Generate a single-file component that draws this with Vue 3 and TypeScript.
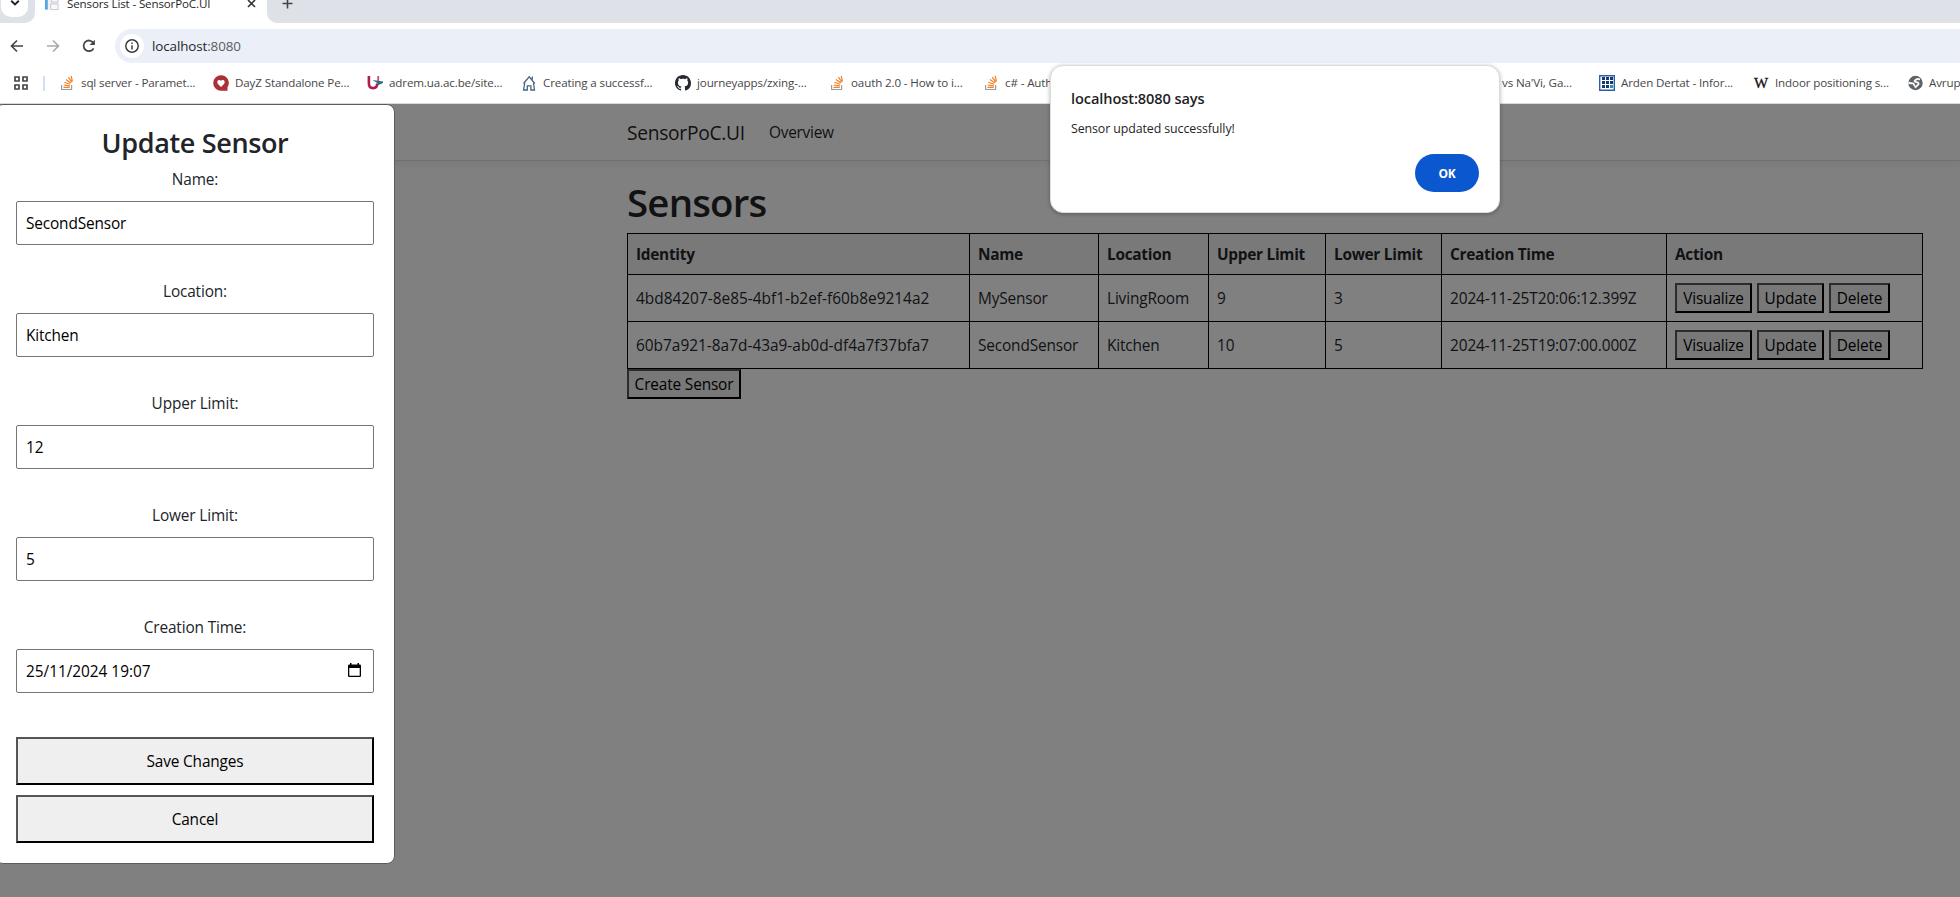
<script setup lang="ts">
import { ref } from 'vue'

interface Bookmark {
  label: string
  icon: string
  left: number
  width: number
}

interface Sensor {
  id: string
  name: string
  location: string
  upper: number
  lower: number
  created: string
}

// left = start of the icon slot, width = room taken up to the next entry
const bookmarks: Bookmark[] = [
  { label: 'sql server - Paramet...', icon: 'stack', left: 59, width: 154 },
  { label: 'DayZ Standalone Pe...', icon: 'heart', left: 213, width: 154 },
  { label: 'adrem.ua.ac.be/site...', icon: 'ua', left: 367, width: 154 },
  { label: 'Creating a successf...', icon: 'house', left: 521, width: 154 },
  { label: 'journeyapps/zxing-...', icon: 'github', left: 675, width: 154 },
  { label: 'oauth 2.0 - How to i...', icon: 'stack', left: 829, width: 154 },
  { label: 'c# - Auth', icon: 'stack', left: 983, width: 154 },
  { label: '', icon: 'none', left: 1137, width: 343 },
  { label: "vs Na'Vi, Ga...", icon: 'none', left: 1480, width: 119 },
  { label: 'Arden Dertat - Infor...', icon: 'grid', left: 1599, width: 154 },
  { label: 'Indoor positioning s...', icon: 'wiki', left: 1753, width: 154 },
  { label: 'Avrup', icon: 'globe', left: 1907, width: 154 },
]

const columns = ['Identity', 'Name', 'Location', 'Upper Limit', 'Lower Limit', 'Creation Time', 'Action']

const sensors: Sensor[] = [
  { id: '4bd84207-8e85-4bf1-b2ef-f60b8e9214a2', name: 'MySensor', location: 'LivingRoom', upper: 9, lower: 3, created: '2024-11-25T20:06:12.399Z' },
  { id: '60b7a921-8a7d-43a9-ab0d-df4a7f37bfa7', name: 'SecondSensor', location: 'Kitchen', upper: 10, lower: 5, created: '2024-11-25T19:07:00.000Z' },
]

const fields = ref([
  { label: 'Name:', value: 'SecondSensor', date: false },
  { label: 'Location:', value: 'Kitchen', date: false },
  { label: 'Upper Limit:', value: '12', date: false },
  { label: 'Lower Limit:', value: '5', date: false },
  { label: 'Creation Time:', value: '25/11/2024 19:07', date: true },
])
</script>

<template>
  <div class="window">
    <div class="tabs">
      <div class="tab-left">
        <div class="tab-search">
          <svg width="10" height="6" viewBox="0 0 10 6"><path d="M1.2 .8 5 4.4 8.8 .8" fill="none" stroke="#202124" stroke-width="1.9" /></svg>
        </div>
      </div>
      <div class="tab">
        <svg class="favicon" width="17" height="16" viewBox="0 0 17 16">
          <path d="M1 0h14v15H1z" fill="#eef2f6" />
          <path d="M1 0h3v15H1z" fill="#55a5dc" />
          <path d="M8 4h7v3H8zM7 9h8v6H7z" fill="#f8f8f8" stroke="#c4c8ce" />
        </svg>
        <span class="tab-title">Sensors List - SensorPoC.UI</span>
        <svg class="tab-close" width="9" height="9" viewBox="0 0 9 9"><path d="M1 1l7 7M8 1 1 8" stroke="#333" stroke-width="1.6" /></svg>
      </div>
      <div class="tab-rest">
        <svg width="11" height="11" viewBox="0 0 11 11"><path d="M5.5 .5v10M.5 5.500h10" stroke="#444" stroke-width="1.600" /></svg>
      </div>
    </div>

    <div class="toolbar">
      <svg class="nav" width="14" height="14" viewBox="0 0 14 14"><path d="M13 7H2M7 1.500 1.500 7 7 12.500" fill="none" stroke="#444746" stroke-width="1.700" /></svg>
      <svg class="nav forward" width="14" height="14" viewBox="0 0 14 14"><path d="M1 7h11M7 1.500 12.500 7 7 12.500" fill="none" stroke="#a9abae" stroke-width="1.700" /></svg>
      <svg class="nav reload" width="14" height="14" viewBox="0 0 14 14"><path d="M11.600 9.300A5.300 5.300 0 1 1 11.400 4" fill="none" stroke="#444746" stroke-width="1.800" /><path d="M12.900.800v5.300H7.600z" fill="#444746" /></svg>
      <div class="omnibox">
        <span class="info">
          <svg width="14" height="14" viewBox="0 0 14 14"><circle cx="7" cy="7" r="6.200" fill="none" stroke="#3c4043" stroke-width="1.500" /><path d="M7 6.200v4.200M7 3.500v1.600" stroke="#3c4043" stroke-width="1.500" /></svg>
        </span>
        <span class="url">localhost<i>:8080</i></span>
      </div>
    </div>

    <div class="bookmarks">
      <svg class="apps" width="14" height="14" viewBox="0 0 14 14"><path d="M1 1h4v4H1zM9 1h4v4H9zM1 9h4v4H1zM9 9h4v4H9z" fill="none" stroke="#444746" stroke-width="1.700" /></svg>
      <span class="divider"></span>
      <div v-for="b in bookmarks" :key="b.left" class="bookmark" :style="{ width: b.width + 'px' }">
        <svg width="16" height="16" viewBox="0 0 16 16">
          <g v-if="b.icon === 'stack'" fill="none">
            <path d="M2.600 10v4.500h10V10" stroke="#9a9ca0" stroke-width="1.200" />
            <path d="M4.500 12.400h6.200M4.600 10l6.200.9M5.300 7.200l5.900 2M6.900 4.400l5 3.600M9.400 2.200l3.400 5M12.200.9l1.200 5.600" stroke="#f48024" stroke-width="1.200" />
          </g>
          <g v-else-if="b.icon === 'heart'">
            <path d="M8 .2a7.800 7.800 0 1 0 0 15.600h6.500v-3.500A7.800 7.800 0 0 0 8 .2z" fill="#a93238" />
            <path d="M8 11.900C5.600 10 4.300 8.700 4.300 7a2 2 0 0 1 3.700-1.100A2 2 0 0 1 11.700 7c0 1.700-1.300 3-3.700 4.900z" fill="#fff" />
          </g>
          <g v-else-if="b.icon === 'ua'" fill="none">
            <path d="M1.900 1v7.500c0 3 1.600 4.600 4.200 4.600s4.100-1.600 4.100-4.600" stroke="#b01c4f" stroke-width="2.600" />
            <path d="M11.200 1v5" stroke="#c24f78" stroke-width="1.800" />
            <path d="M5.500 5 16 6.500v1.500l-5 2.200-.8-2.200z" fill="#2c6d86" />
          </g>
          <g v-else-if="b.icon === 'house'" fill="none" stroke="#4a6680" stroke-width="1.300">
            <path d="M2.500 8.500 8.200 1.800 13.800 8.500M3.700 8 2.600 15h3.700v-4.200h3.600V15h3.600l-1-7M11.300 1.500v3" />
          </g>
          <path v-else-if="b.icon === 'github'" fill="#24292f" d="M8 0C3.580 0 0 3.580 0 8c0 3.540 2.290 6.530 5.470 7.590.4.070.55-.17.55-.38 0-.19-.01-.82-.01-1.490-2.010.37-2.530-.49-2.690-.94-.09-.23-.48-.94-.82-1.130-.28-.15-.68-.52-.01-.53.63-.01 1.080.58 1.230.82.72 1.210 1.870.87 2.330.66.07-.52.28-.87.51-1.070-1.780-.2-3.640-.89-3.640-3.950 0-.87.31-1.590.82-2.150-.08-.2-.36-1.020.08-2.120 0 0 .67-.21 2.200.82.64-.18 1.320-.27 2-.27s1.360.09 2 .27c1.530-1.040 2.200-.82 2.200-.82.44 1.100.16 1.920.08 2.120.51.56.82 1.270.82 2.150 0 3.070-1.870 3.750-3.650 3.950.29.25.54.73.54 1.480 0 1.070-.01 1.930-.01 2.200 0 .21.15.46.55.38A8.010 8.010 0 0 0 16 8c0-4.420-3.580-8-8-8z" />
          <g v-else-if="b.icon === 'grid'">
            <path d="M.7.700h14.600v14.600H.7z" fill="#fff" stroke="#2f5da8" stroke-width="1.400" />
            <path d="M3 2h3v3H3zM7 2h3v3H7zM11 2h3v3h-3zM3 6h3v3H3zM7 6h3v3H7zM11 6h3v3h-3zM3 10h3v3H3zM7 10h3v3H7z" fill="#123a70" />
            <path d="M11 10h3v3h-3z" fill="#14a0a0" />
          </g>
          <text v-else-if="b.icon === 'wiki'" x="8" y="13" text-anchor="middle" class="wiki" textLength="14" lengthAdjust="spacingAndGlyphs">W</text>
          <g v-else-if="b.icon === 'globe'">
            <circle cx="8.500" cy="8" r="7.200" fill="#5f6368" />
            <path d="M1.500 7.500c1.500 1.500 3.500.2 4.800 1.100s.3 1.900 1.700 2.400M13 4.300c-1.500 0-2.300-.9-3.400 0s-2.200.7-2 1.800 1.600.8 2.900 1.200 1.500 2 .3 2.700-1.500 1.600-2.900 2.800" fill="none" stroke="#fff" stroke-width="1.800" />
          </g>
        </svg>
        <span>{{ b.label }}</span>
      </div>
    </div>

    <main class="page">
      <header class="navbar">
        <span class="brand">SensorPoC.UI</span>
        <span class="link">Overview</span>
      </header>
      <section class="content">
        <h1>Sensors</h1>
        <table>
          <colgroup>
            <col class="c1" /><col class="c2" /><col class="c3" /><col class="c4" /><col class="c5" /><col class="c6" /><col class="c7" />
          </colgroup>
          <thead>
            <tr><th v-for="c in columns" :key="c">{{ c }}</th></tr>
          </thead>
          <tbody>
            <tr v-for="s in sensors" :key="s.id">
              <td class="ident">{{ s.id }}</td>
              <td>{{ s.name }}</td>
              <td>{{ s.location }}</td>
              <td>{{ s.upper }}</td>
              <td>{{ s.lower }}</td>
              <td class="created">{{ s.created }}</td>
              <td class="action-cell">
                <div class="actions">
                  <button class="dim visualize">Visualize</button>
                  <button class="dim update">Update</button>
                  <button class="dim delete">Delete</button>
                </div>
              </td>
            </tr>
          </tbody>
        </table>
        <button class="dim create">Create Sensor</button>
      </section>

      <form class="modal" @submit.prevent>
        <h2>Update Sensor</h2>
        <div v-for="f in fields" :key="f.label" class="field">
          <label>{{ f.label }}</label>
          <div class="control">
            <input v-model="f.value" type="text" spellcheck="false" :class="{ date: f.date }" />
            <svg v-if="f.date" class="calendar" width="13" height="14" viewBox="0 0 13 14"><path d="M2 0h1.500v1.500h6V0H11v1.500h.8q1.200 0 1.200 1.200v10.100q0 1.200-1.200 1.200H1.200Q0 14 0 12.800V2.700q0-1.200 1.200-1.200H2zM1.300 5v7.700h10.400V5z" fill="#000" fill-rule="evenodd" /></svg>
          </div>
        </div>
        <button class="wide">Save Changes</button>
        <button class="wide">Cancel</button>
      </form>
    </main>

    <div class="dialog">
      <div class="dialog-title">localhost:8080 says</div>
      <div class="dialog-text">Sensor updated successfully!</div>
      <div class="dialog-actions"><button class="ok">OK</button></div>
    </div>
  </div>
</template>

<style>
body {
  margin: 0;
  overflow: hidden;
}
</style>

<style scoped>
.window {
  position: relative;
  width: 1960px;
  height: 897px;
  overflow: hidden;
  display: flex;
  flex-direction: column;
  background: #fff;
  color: #212529;
  font: 15.4px/24px "Open Sans", "Noto Sans", sans-serif;
  letter-spacing: -0.15px;
}
.window * {
  box-sizing: border-box;
}
svg {
  display: block;
  flex: none;
}

/* browser chrome */
.tabs {
  display: flex;
  height: 23px;
  flex: none;
}
.tab-left {
  width: 35px;
  background: #dee1e8;
  border-radius: 0 0 10px 0;
  padding-left: 1px;
}
.tab-search {
  width: 27px;
  height: 17px;
  background: #fff;
  border-radius: 0 0 10px 10px;
  display: flex;
  justify-content: center;
}
.tab {
  width: 232px;
  display: flex;
  padding-left: 9px;
  overflow: hidden;
}
.favicon {
  margin-top: -5px;
  width: 16px;
}
.tab-title {
  margin-left: 7px;
  width: 180px;
  margin-top: -8px;
  white-space: nowrap;
  font-size: 11.6px;
  letter-spacing: -0.15px;
  color: #1f1f1f;
}
.tab-close {
  margin-top: -1px;
}
.tab-rest {
  flex: 1;
  background: #dee1e8;
  border-radius: 0 0 0 10px;
  padding: 0 0 0 15px;
}
.tab-rest svg {
  margin-top: -2px;
}
.toolbar {
  height: 42px;
  flex: none;
  display: flex;
  align-items: center;
  padding-left: 10px;
}
.nav {
  margin: 4px 22px 0 0;
}
.forward {
  margin-right: 22px;
}
.reload {
  margin-right: 19px;
}
.omnibox {
  flex: 1;
  height: 34px;
  margin-top: 4px;
  background: #ebeff8;
  border-radius: 17px 0 0 17px;
  display: flex;
  align-items: center;
  padding-left: 5px;
}
.info {
  width: 24px;
  height: 24px;
  border-radius: 50%;
  background: #fff;
  display: flex;
  align-items: center;
  justify-content: center;
}
.url {
  margin-left: 8px;
  font-size: 13.4px;
  letter-spacing: -0.1px;
  color: #1f1f1f;
}
.url i {
  font-style: normal;
  color: #5a5d61;
}
.bookmarks {
  height: 39px;
  flex: none;
  display: flex;
  align-items: center;
  border-bottom: 1px solid #dcdcdc;
  padding: 0 0 2px 14px;
}
.divider {
  width: 2px;
  height: 15px;
  margin: 0 14px 0 15px;
  background: #cfe0fb;
  flex: none;
}
.bookmark {
  flex: none;
  display: flex;
  align-items: center;
  gap: 6px;
  overflow: hidden;
  white-space: nowrap;
  color: #474747;
  font-size: 11.6px;
  letter-spacing: -0.13px;
}
.wiki {
  font: 15px "Liberation Serif", serif;
  fill: #111;
  stroke: #111;
  stroke-width: 0.3px;
}

/* dimmed page */
.page {
  flex: 1;
  position: relative;
  background: #808080;
}
.navbar {
  height: 57px;
  border-bottom: 1px solid #717171;
  box-shadow: 0 3px 8px rgba(0, 0, 0, 0.05);
  display: flex;
  align-items: center;
  padding: 1px 0 0 627px;
  color: #111;
}
.brand {
  width: 142px;
  font-size: 19.2px;
  letter-spacing: -0.28px;
}
.link {
  letter-spacing: -0.25px;
}
.content {
  padding: 17px 37px 0 627px;
  color: #101214;
}
h1 {
  margin: 0 0 7px;
  font-size: 38.4px;
  line-height: 48px;
  font-weight: 600;
  letter-spacing: -0.8px;
}
table {
  width: 1296px;
  table-layout: fixed;
  border-collapse: collapse;
}
th,
td {
  border: 1px solid #000;
  padding: 9px 8px 7px;
  text-align: left;
  white-space: nowrap;
}
th {
  height: 41px;
  background: #797979;
  font-weight: 700;
  letter-spacing: -0.28px;
}
td {
  height: 47px;
}
.ident {
  letter-spacing: 0.01px;
}
.created {
  letter-spacing: -0.1px;
}
.action-cell {
  padding: 8px;
}
.c1 { width: 342px; }
.c2 { width: 129px; }
.c3 { width: 110px; }
.c4 { width: 117px; }
.c5 { width: 116px; }
.c6 { width: 225px; }
.c7 { width: 256px; }
button {
  font: inherit;
  letter-spacing: inherit;
  padding: 2px 0 0;
  color: #000;
  white-space: nowrap;
}
.actions {
  display: flex;
  gap: 5px;
}
.dim {
  height: 30px;
  background: #787878;
  border: 2px solid;
  border-color: #2b2b2b #000 #000 #2b2b2b;
}
.visualize { width: 77px; }
.update { width: 67px; }
.delete { width: 61px; }
.create {
  display: block;
  width: 114px;
}

/* edit panel */
.modal {
  position: absolute;
  left: -5px;
  top: 0;
  width: 400px;
  height: 760px;
  padding: 21px 20px 20px;
  background: #fff;
  border: 1px solid #5c5c5c;
  border-radius: 8px;
  text-align: center;
}
h2 {
  margin: 0 0 4px;
  font-size: 27px;
  line-height: 34px;
  font-weight: 600;
  letter-spacing: -0.35px;
}
.field {
  height: 112px;
  padding-top: 4px;
}
label {
  display: block;
  height: 33px;
}
.control {
  position: relative;
}
input {
  display: block;
  width: 358px;
  height: 44px;
  padding: 1px 9px 0;
  border: 1px solid #767676;
  border-radius: 2px;
  background: #fff;
  color: #000;
  font: inherit;
  letter-spacing: inherit;
  outline: none;
}
.date {
  letter-spacing: -0.03px;
}
.calendar {
  position: absolute;
  right: 13px;
  top: 14px;
}
.wide {
  display: block;
  width: 358px;
  height: 48px;
  margin-bottom: 10px;
  background: #efefef;
  border: 2px solid;
  border-color: #555 #000 #000 #555;
}
.field + .wide {
  margin-top: 13px;
}

/* browser alert */
.dialog {
  position: absolute;
  left: 1050px;
  top: 65px;
  width: 450px;
  height: 148px;
  padding: 21px 20px 0;
  background: #fff;
  border: 1px solid #dcdcdc;
  border-radius: 13px;
  box-shadow: 0 1px 4px rgba(0, 0, 0, 0.3);
  color: #1f1f1f;
}
.dialog-title {
  font-size: 14.6px;
  font-weight: 600;
  line-height: 22px;
  letter-spacing: -0.1px;
}
.dialog-text {
  margin-top: 10px;
  font-size: 12.4px;
  line-height: 20px;
  letter-spacing: -0.1px;
}
.dialog-actions {
  display: flex;
  justify-content: flex-end;
  margin-top: 15px;
}
.ok {
  width: 64px;
  height: 38px;
  border: 0;
  border-radius: 19px;
  background: #0b57d0;
  color: #fff;
  font-size: 12px;
  font-weight: 700;
}
</style>
